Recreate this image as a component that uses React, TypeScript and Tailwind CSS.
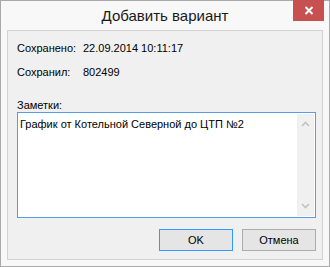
import React from "react";

const font = { fontFamily: '"Liberation Sans", Arial, sans-serif' };

function Chevron({ up }: { up?: boolean }) {
  return (
    <svg width="9" height="6" viewBox="0 0 9 6" className="block">
      <path d={up ? "M1 5 L4.5 1.5 L8 5" : "M1 1 L4.5 4.5 L8 1"} fill="none" stroke="#c2c2c2" strokeWidth="1.6" />
    </svg>
  );
}

export default function App() {
  return (
    <div className="flex h-[267px] w-[330px] flex-col border border-[#a9a9a9] bg-[#f8f8f8] text-[11px] text-black" style={font}>
      {/* title bar */}
      <div className="relative flex h-[29px] shrink-0 items-center justify-center">
        <span className="pt-[2px] text-[15px] text-[#1a1a1a]">Добавить вариант</span>
        <div className="absolute right-[5px] top-[-1px] flex h-[21px] w-[31px] items-center justify-center bg-[#c75050]">
          <svg width="10" height="9" viewBox="0 0 10 9">
            <path d="M1.5 1 L8.5 8 M8.5 1 L1.5 8" stroke="white" strokeWidth="2" />
          </svg>
        </div>
      </div>

      {/* client area */}
      <div className="mx-[6px] mb-[6px] flex flex-1 flex-col border border-[#d2d2d2] bg-[#f0f0f0] pl-[9px] pr-[6px] pt-[11px]">
        <div className="flex h-[13px] items-center">
          <span className="w-[66px]">Сохранено:</span>
          <span>22.09.2014 10:11:17</span>
        </div>
        <div className="mt-[11px] flex h-[13px] items-center">
          <span className="w-[66px]">Сохранил:</span>
          <span>802499</span>
        </div>
        <div className="mt-[18px] h-[13px]">Заметки:</div>

        <div className="mt-[2px] flex h-[106px] border border-[#569de5] bg-white">
          <div className="flex-1 pl-[2px] pt-[3px]">График от Котельной Северной до ЦТП №2</div>
          <div className="m-[1px] flex w-[17px] flex-col items-center justify-between bg-[#f0f0f0] py-[7px]">
            <Chevron up />
            <Chevron />
          </div>
        </div>

        <div className="mt-[11px] flex justify-end gap-[9px]">
          <button className="flex h-[22px] w-[74px] items-center justify-center border border-[#3399ff] bg-[#e5e5e5] text-[11px]">OK</button>
          <button className="flex h-[22px] w-[74px] items-center justify-center border border-[#acacac] bg-[#e5e5e5] text-[11px]">Отмена</button>
        </div>
      </div>
    </div>
  );
}
